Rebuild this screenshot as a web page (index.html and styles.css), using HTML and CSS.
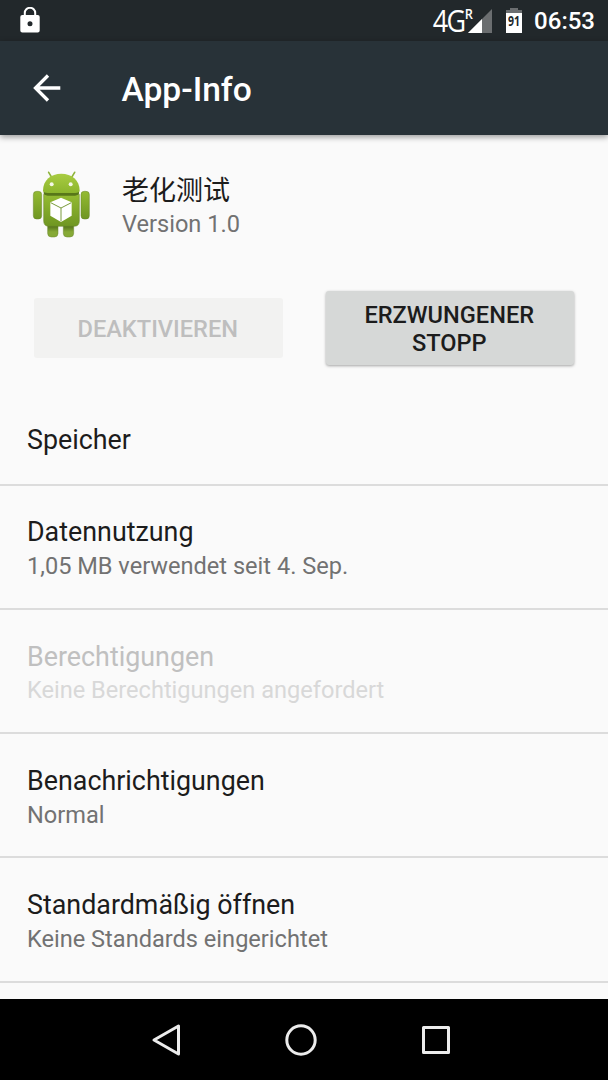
FILE: index.html
```html
<!DOCTYPE html>
<html lang="de">
<head>
  <meta charset="UTF-8">
  <title>App-Info</title>
  <link rel="stylesheet" href="styles.css">
</head>
<body>
  <div class="screen">
    <div class="statusbar">
      <svg class="lock" width="20" height="26" viewBox="0 0 20 26">
        <path d="M4.8 9V6a5.2 5.2 0 0 1 10.4 0v3" fill="none" stroke="#fff" stroke-width="2"/>
        <path fill="#fff" fill-rule="evenodd" d="M2.300 8h15.400a2 2 0 0 1 2 2v13.500a2 2 0 0 1-2 2H2.300a2 2 0 0 1-2-2V10a2 2 0 0 1 2-2zM10 14.300a2.500 2.500 0 1 0 0 5 2.500 2.500 0 0 0 0-5z"/>
      </svg>
      <div class="status-right">
        <span class="network">4G</span><span class="roaming">R</span>
        <svg class="signal" width="24" height="24" viewBox="0 0 24 24">
          <path fill="#6b6e70" d="M24 0v24H0z"/>
          <path fill="#fff" d="M14 10v14H0z"/>
        </svg>
        <div class="battery"><span>91</span></div>
        <span class="clock">06:53</span>
      </div>
    </div>

    <header class="toolbar">
      <svg class="back" width="28" height="28" viewBox="0 0 28 28">
        <path d="M15 1.500L2.500 14 15 26.500M2.500 14H27.300" fill="none" stroke="#fff" stroke-width="3.300"/>
      </svg>
      <h1>App-Info</h1>
    </header>

    <main>
      <div class="app">
        <svg class="app-icon" width="70" height="78" viewBox="0 0 210 234">
          <defs>
            <linearGradient id="body" x1="0" y1="0" x2="0" y2="1">
              <stop offset="0" stop-color="#94bb32"/>
              <stop offset="1" stop-color="#6f9622"/>
            </linearGradient>
            <linearGradient id="head" x1="0" y1="0" x2="0" y2="1">
              <stop offset="0" stop-color="#a9cc42"/>
              <stop offset="1" stop-color="#8cb52d"/>
            </linearGradient>
            <linearGradient id="leg" x1="0" y1="0" x2="0" y2="1">
              <stop offset="0.3" stop-color="#4b6a14"/>
              <stop offset="0.700" stop-color="#86a936"/>
            </linearGradient>
          </defs>
          <path d="M68 22l11 18M146 22l-11 18" stroke="#8db33a" stroke-width="5" stroke-linecap="round"/>
          <g stroke="#66842a" stroke-width="1.500">
            <rect x="65" y="165" width="31" height="51" rx="11" fill="url(#leg)"/>
            <rect x="112" y="165" width="31" height="51" rx="11" fill="url(#leg)"/>
            <rect x="22" y="79" width="25" height="83" rx="10" fill="url(#body)"/>
            <rect x="165" y="79" width="25" height="83" rx="10" fill="url(#body)"/>
            <path d="M53 88h107v80q0 16-16 16H69q-16 0-16-16z" fill="url(#body)"/>
          </g>
          <path d="M53 80h106v5q0 5-12 7H65q-12-2-12-7z" fill="#587719"/>
          <path d="M51 77c0-32 24-51 55-51s55 19 55 51q0 6-14 7H66q-15-1-15-7z" fill="url(#head)"/>
          <circle cx="77" cy="58" r="6" fill="#f4f8e8"/>
          <circle cx="134" cy="58" r="6" fill="#f4f8e8"/>
          <path d="M105 98l32 14v40l-32 19-32-19v-40z" fill="#fff"/>
          <path d="M74 113l31 16 31-16M105 129v40" fill="none" stroke="#7a9b3c" stroke-width="3"/>
        </svg>
        <div>
          <div class="app-name">老化测试</div>
          <div class="summary">Version 1.0</div>
        </div>
      </div>

      <div class="actions">
        <button class="btn" disabled>Deaktivieren</button>
        <button class="btn btn-stop">Erzwungener<br>Stopp</button>
      </div>

      <ul class="list">
        <li class="single">
          <div class="title">Speicher</div>
        </li>
        <li>
          <div class="title">Datennutzung</div>
          <div class="summary">1,05 MB verwendet seit 4. Sep.</div>
        </li>
        <li class="disabled">
          <div class="title">Berechtigungen</div>
          <div class="summary">Keine Berechtigungen angefordert</div>
        </li>
        <li>
          <div class="title">Benachrichtigungen</div>
          <div class="summary">Normal</div>
        </li>
        <li>
          <div class="title">Standardmäßig öffnen</div>
          <div class="summary">Keine Standards eingerichtet</div>
        </li>
      </ul>
    </main>

    <nav class="navbar">
      <svg width="32" height="34" viewBox="0 0 32 34">
        <path d="M27.500 3v28L3 17z" fill="none" stroke="#ececec" stroke-width="3" stroke-linejoin="round"/>
      </svg>
      <svg width="34" height="34" viewBox="0 0 34 34">
        <circle cx="17" cy="17" r="14.200" fill="none" stroke="#ececec" stroke-width="3"/>
      </svg>
      <svg width="34" height="34" viewBox="0 0 34 34">
        <rect x="4.500" y="4.500" width="25" height="25" fill="none" stroke="#ececec" stroke-width="3" stroke-linejoin="round"/>
      </svg>
    </nav>
  </div>
</body>
</html>
```

FILE: styles.css
```css
* {
  box-sizing: border-box;
}
body {
  margin: 0;
  font-family: Roboto, "Noto Sans CJK SC", sans-serif;
  background: #fafafa;
  color: #1c1c1c;
}
.screen {
  width: 608px;
  height: 1080px;
  display: flex;
  flex-direction: column;
  overflow: hidden;
}

/* status bar */
.statusbar {
  height: 41px;
  flex: none;
  display: flex;
  justify-content: space-between;
  align-items: center;
  padding: 0 13px 0 20px;
  background: #22282b;
  color: #fff;
}
.lock {
  margin-bottom: 1px;
}
.status-right {
  display: flex;
  align-items: center;
}
.network {
  margin-right: -1px;
  font-family: "Open Sans", sans-serif;
  font-size: 31px;
  line-height: 41px;
  letter-spacing: -2px;
  transform: scaleX(0.87);
  transform-origin: right;
}
.roaming {
  font-family: "Open Sans", sans-serif;
  font-size: 15px;
  line-height: 15px;
  font-weight: 600;
  margin-bottom: 15px;
  transform: scaleX(0.85);
}
.signal {
  margin-left: -5px;
}
.battery {
  width: 16px;
  height: 25px;
  margin-left: 14px;
  background:
    linear-gradient(#6b6e70, #6b6e70) center top / 8px 3px no-repeat,
    linear-gradient(#6b6e70, #6b6e70) center 2px / 16px 3px no-repeat,
    linear-gradient(#fff, #fff) center bottom / 16px 20px no-repeat;
  color: #22282b;
  font-family: "Open Sans", sans-serif;
  font-size: 14px;
  font-weight: 700;
  line-height: 25px;
  text-align: center;
}
.battery span {
  display: block;
  transform: scaleX(0.75);
}
.clock {
  margin-left: 12px;
  font-size: 24px;
  font-weight: 500;
}

/* toolbar */
.toolbar {
  height: 94px;
  flex: none;
  display: flex;
  align-items: center;
  padding-left: 33px;
  background: #283238;
  color: #fff;
  box-shadow: 0 2px 6px rgba(0, 0, 0, 0.4);
}
.toolbar h1 {
  margin: 2px 0 0 60.5px;
  font-size: 33.6px;
  font-weight: 500;
}

main {
  flex: 1;
  min-height: 0;
  overflow: hidden;
}
.app {
  display: flex;
  height: 156px;
  padding: 30px 0 0 26px;
}
.app-name {
  margin: 10px 0 0 26px;
  font-size: 27px;
  line-height: 32px;
}
.app .summary {
  margin: 3px 0 0 26px;
}
.summary {
  font-size: 23.58px;
  line-height: 28px;
  color: #727272;
}

/* buttons */
.actions {
  display: flex;
  align-items: center;
  height: 74px;
  padding: 0 34px;
  gap: 43px;
}
.btn {
  flex: 1;
  height: 60px;
  padding: 3px 1px 0 0;
  border: none;
  border-radius: 3px;
  background: #d6d8d7;
  color: #1c1c1c;
  font-family: inherit;
  font-size: 23.6px;
  font-weight: 500;
  line-height: 27.7px;
  text-transform: uppercase;
}
.btn-stop {
  height: 74px;
  box-shadow: 0 1px 3px rgba(0, 0, 0, 0.35);
}
.btn:disabled {
  background: #f2f2f1;
  color: #bebebe;
}

/* preference list */
.list {
  list-style: none;
  margin: 0;
  padding: 0;
}
.list li {
  height: 124.25px;
  padding: 30.7px 27px 0;
  border-bottom: 2px solid #dcdcdc;
}
.list .single {
  height: 120.7px;
  padding-top: 58.7px;
}
.title {
  font-size: 26.85px;
  line-height: 32px;
}
.list .summary {
  margin-top: 3.8px;
}
.disabled .title {
  color: #c0c0c0;
}
.disabled .summary {
  color: #d8d8d8;
}

/* navigation bar */
.navbar {
  height: 81px;
  flex: none;
  display: flex;
  justify-content: center;
  align-items: center;
  gap: 101px;
  padding-right: 5px;
  background: #000;
}
```
